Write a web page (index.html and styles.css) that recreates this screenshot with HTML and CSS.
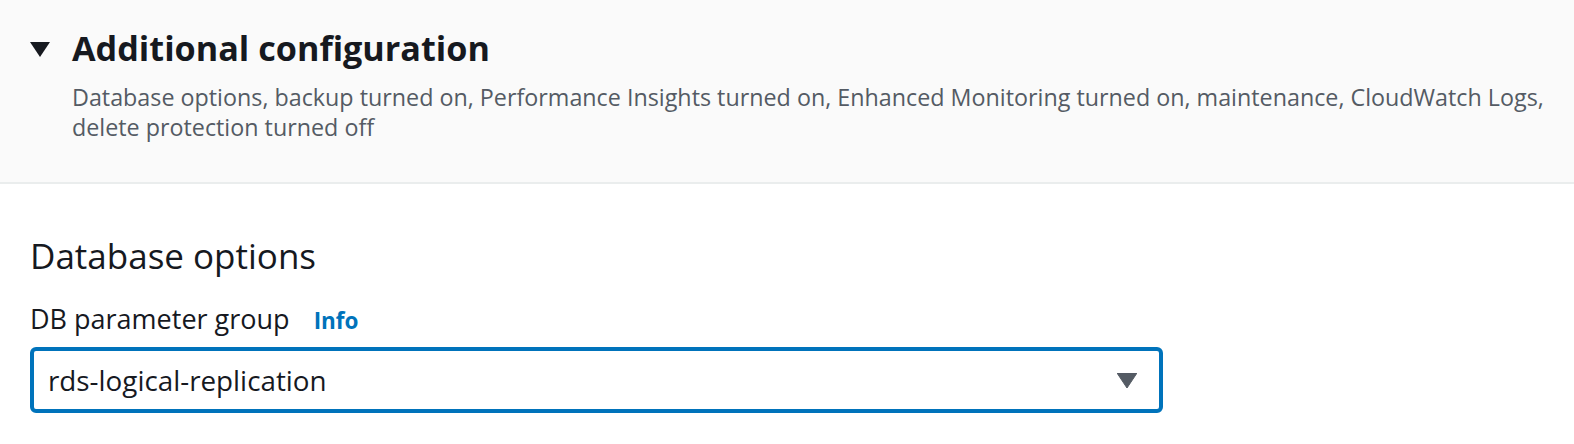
FILE: index.html
```html
<!DOCTYPE html>
<html>
<head>
<meta charset="utf-8">
<link rel="stylesheet" href="styles.css">
</head>
<body>
<div class="page">
  <header class="exp-header">
    <div class="exp-title-row">
      <svg class="caret" width="20" height="15" viewBox="0 0 20 15"><polygon points="0,0 20,0 10,15" fill="#16191f"/></svg>
      <h2 class="exp-title">Additional configuration</h2>
    </div>
    <p class="exp-desc">Database options, backup turned on, Performance Insights turned on, Enhanced Monitoring turned on, maintenance, CloudWatch Logs, delete protection turned off</p>
  </header>
  <section class="content">
    <h3 class="section-title">Database options</h3>
    <div class="field">
      <div class="label-row">
        <span class="label">DB parameter group</span>
        <a class="info">Info</a>
      </div>
      <div class="select">
        <span class="select-value">rds-logical-replication</span>
        <svg class="select-caret" width="20" height="15" viewBox="0 0 20 15"><polygon points="0,0 20,0 10,15" fill="#545b64" stroke="#545b64" stroke-width="1" stroke-linejoin="round"/></svg>
      </div>
    </div>
  </section>
</div>
</body>
</html>
```
FILE: styles.css
```css
* { box-sizing: border-box; }
html, body { margin: 0; padding: 0; background: #ffffff; }
body {
  font-family: "Open Sans", "Noto Sans", sans-serif;
  color: #16191f;
  width: 1574px;
  height: 444px;
  overflow: hidden;
}
.page { display: flex; flex-direction: column; }
.exp-header {
  background: #fafafa;
  border-bottom: 2px solid #eaeded;
  height: 184px;
  padding: 26px 30px 0 30px;
}
.exp-title-row { display: flex; align-items: center; gap: 22px; }
.caret { flex: none; margin-top: 2px; }
.exp-title {
  margin: 0;
  font-size: 34.2px;
  font-weight: 700;
  line-height: 44px;
}
.exp-desc {
  margin: 12px 0 0 42px;
  font-size: 23.3px;
  line-height: 30px;
  color: #545b64;
}
.content { padding: 50px 0 0 30px; }
.section-title {
  margin: 0;
  font-size: 35px;
  font-weight: 400;
  line-height: 44px;
}
.field { margin-top: 23px; }
.label-row { display: flex; align-items: baseline; gap: 24px; }
.label { font-size: 27px; line-height: 36px; }
.info { font-size: 22.5px; font-weight: 700; color: #0073bb; }
.select {
  margin-top: 10px;
  width: 1133px;
  height: 66px;
  border: 4px solid #0073bb;
  border-radius: 6px;
  display: flex;
  align-items: center;
  justify-content: space-between;
  padding: 0 22px 0 14px;
}
.select-value { font-size: 27.8px; }
```
